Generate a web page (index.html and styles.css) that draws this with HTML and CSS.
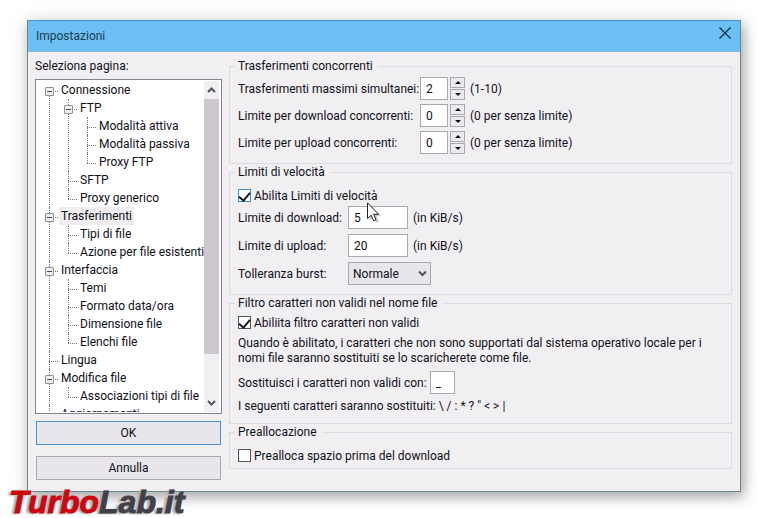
FILE: index.html
```html
<!DOCTYPE html>
<html lang="it">
<head>
<meta charset="utf-8">
<title>Impostazioni</title>
<link rel="stylesheet" href="styles.css">
</head>
<body>
<main class="window">
  <header class="titlebar">
    <h1>Impostazioni</h1>
    <button class="close" type="button" aria-label="Chiudi">
      <svg width="12" height="12" viewBox="0 0 12 12"><path d="M0.5 0.5 11.5 11.5M11.5 0.5 0.5 11.5" stroke="#12303f" stroke-width="1.3" fill="none"/></svg>
    </button>
  </header>
  <form class="content">
    <section class="sidebar">
      <h2>Seleziona pagina:</h2>
      <div class="tree-box">
        <ul class="tree">
          <li><button class="toggle" type="button" aria-label="Comprimi"></button><span>Connessione</span>
            <ul>
              <li><button class="toggle" type="button" aria-label="Comprimi"></button><span>FTP</span>
                <ul>
                  <li><span>Modalità attiva</span></li>
                  <li><span>Modalità passiva</span></li>
                  <li><span>Proxy FTP</span></li>
                </ul>
              </li>
              <li><span>SFTP</span></li>
              <li><span>Proxy generico</span></li>
            </ul>
          </li>
          <li><button class="toggle" type="button" aria-label="Comprimi"></button><span class="selected">Trasferimenti</span>
            <ul>
              <li><span>Tipi di file</span></li>
              <li><span>Azione per file esistenti</span></li>
            </ul>
          </li>
          <li><button class="toggle" type="button" aria-label="Comprimi"></button><span>Interfaccia</span>
            <ul>
              <li><span>Temi</span></li>
              <li><span>Formato data/ora</span></li>
              <li><span>Dimensione file</span></li>
              <li><span>Elenchi file</span></li>
            </ul>
          </li>
          <li><span>Lingua</span></li>
          <li><button class="toggle" type="button" aria-label="Comprimi"></button><span>Modifica file</span>
            <ul>
              <li><span>Associazioni tipi di file</span></li>
            </ul>
          </li>
          <li><span>Aggiornamenti</span></li>
        </ul>
        <div class="scrollbar">
          <svg width="15" height="18" viewBox="0 0 15 18"><path d="M4 11 7.5 7.5 11 11" stroke="#55525a" stroke-width="2" fill="none"/></svg>
          <div class="thumb"></div>
          <svg width="15" height="18" viewBox="0 0 15 18"><path d="M4 7 7.5 10.5 11 7" stroke="#55525a" stroke-width="2" fill="none"/></svg>
        </div>
      </div>
      <button class="action primary" type="button">OK</button>
      <button class="action" type="button">Annulla</button>
    </section>
    <section class="page">
      <fieldset>
        <legend>Trasferimenti concorrenti</legend>
        <div class="rows transfers">
          <label for="max">Trasferimenti massimi simultanei:</label>
          <input id="max" type="text" value="2">
          <span class="spin"><button type="button" aria-label="Aumenta"></button><button type="button" class="down" aria-label="Diminuisci"></button></span>
          <span>(1-10)</span>
          <label for="maxdown">Limite per download concorrenti:</label>
          <input id="maxdown" type="text" value="0">
          <span class="spin"><button type="button" aria-label="Aumenta"></button><button type="button" class="down" aria-label="Diminuisci"></button></span>
          <span>(0 per senza limite)</span>
          <label for="maxup">Limite per upload concorrenti:</label>
          <input id="maxup" type="text" value="0">
          <span class="spin"><button type="button" aria-label="Aumenta"></button><button type="button" class="down" aria-label="Diminuisci"></button></span>
          <span>(0 per senza limite)</span>
        </div>
      </fieldset>
      <fieldset>
        <legend>Limiti di velocità</legend>
        <label class="check limits"><input type="checkbox" class="hot" checked>Abilita Limiti di velocità</label>
        <div class="rows speed">
          <label for="down">Limite di download:</label>
          <input id="down" type="text" value="5">
          <span>(in KiB/s)</span>
          <label for="up">Limite di upload:</label>
          <input id="up" type="text" value="20">
          <span>(in KiB/s)</span>
          <label for="burst">Tolleranza burst:</label>
          <span class="select">
            <select id="burst"><option>Normale</option></select>
            <svg width="9" height="7" viewBox="0 0 9 7"><path d="M1 1.5 4.500 5 8 1.500" stroke="#55525a" stroke-width="2" fill="none"/></svg>
          </span>
        </div>
      </fieldset>
      <fieldset>
        <legend>Filtro caratteri non validi nel nome file</legend>
        <label class="check filter"><input type="checkbox" checked>Abiliita filtro caratteri non validi</label>
        <p>Quando è abilitato, i caratteri che non sono supportati dal sistema operativo locale per i<br>nomi file saranno sostituiti se lo scaricherete come file.</p>
        <div class="replace">
          <label for="char">Sostituisci i caratteri non validi con:</label>
          <input id="char" type="text" value="_">
        </div>
        <div class="chars">I seguenti caratteri saranno sostituiti: \ / : * ? " &lt; &gt; |</div>
      </fieldset>
      <fieldset class="last">
        <legend>Preallocazione</legend>
        <label class="check"><input type="checkbox">Prealloca spazio prima del download</label>
      </fieldset>
    </section>
  </form>
</main>
<svg class="cursor" width="17" height="22" viewBox="0 0 17 22">
  <path d="M3 3V18L6.500 15 9 21 12 19.500 9.500 14H14Z" fill="#000" opacity=".2"/>
  <path d="M.5 .8V16.500L4.200 13.200 6.600 18.800 9 17.700 6.600 12.300H11.600Z" fill="#fff" stroke="#222" stroke-width="1"/>
</svg>
<div class="logo"><span>Turbo</span>Lab.it</div>
</body>
</html>
```
FILE: styles.css
```css
* { box-sizing: border-box; }

body {
  margin: 0;
  padding: 20px 27px 26px;
  position: relative;
  background: #fff;
  color: #101018;
  font: 12px/18px Roboto, "Open Sans", sans-serif;
}

h1, h2, p, ul, fieldset, legend { margin: 0; padding: 0; }
h1, h2 { font-size: 12px; font-weight: 400; }
button, input, select { font: inherit; color: inherit; margin: 0; padding: 0; }

.window {
  background: #f2eff3;
  border: 1px solid #65898c;
  border-top-color: #4f93c6;
  box-shadow: 3px 5px 12px rgba(0, 0, 0, .3), 0 0 20px rgba(0, 0, 0, .1);
}

.titlebar {
  display: flex;
  justify-content: space-between;
  align-items: flex-start;
  height: 31px;
  padding: 6px 9px 0 8px;
  background: #6bbff3;
  border-bottom: 1px solid #82b8d8;
  color: #1d3c50;
}
.close { display: flex; border: 0; background: none; }

.content {
  display: grid;
  grid-template-columns: 187px minmax(0, 1fr);
  gap: 7px;
  padding: 7px 7px 0;
}

.sidebar { display: flex; flex-direction: column; }
.sidebar h2 { height: 20px; line-height: 14px; }

.tree-box {
  display: flex;
  height: 335px;
  margin-bottom: 7px;
  padding: 1px 2px 1px 0;
  overflow: hidden;
  background: #fff;
  border: 1px solid #85828a;
}
.tree { flex: 1; min-width: 0; padding-left: 13px; overflow: hidden; }
.tree, .tree ul { list-style: none; white-space: nowrap; }
.tree ul { padding-left: 7px; }
.tree li { position: relative; padding-left: 12px; }
.tree span { display: block; width: max-content; }
.tree li::before {
  content: "";
  position: absolute;
  left: 0;
  top: 0;
  bottom: 0;
  border-left: 1px dotted #777;
}
.tree li:last-child::before { bottom: auto; height: 10px; }
.tree > li:first-child::before { top: 10px; }
.tree li::after {
  content: "";
  position: absolute;
  left: 0;
  top: 10px;
  width: 9px;
  border-top: 1px dotted #777;
}
.toggle {
  position: absolute;
  z-index: 1;
  left: -4px;
  top: 6px;
  width: 9px;
  height: 9px;
  border: 1px solid #8f8f96;
  border-radius: 1px;
  background: linear-gradient(#445, #445) center / 5px 1px no-repeat, #efeff2;
}
.tree .selected { margin-left: -2px; padding: 0 2px; background: #efedf0; }

.scrollbar {
  display: flex;
  flex: none;
  flex-direction: column;
  width: 15px;
  background: #f1eff2;
}
.thumb { height: 255px; margin-bottom: auto; background: #cdc8cd; }

.action {
  height: 24px;
  margin: 0 1px 11px;
  border: 1px solid #aaa8ae;
  background: #e8e6ea;
}
.action.primary { border-color: #4d94cf; }

fieldset {
  min-width: 0;
  margin-bottom: 1px;
  padding: 0 8px 8px;
  border: 1px solid #dddae0;
  white-space: nowrap;
}
fieldset.last { padding-bottom: 5px; }
.page { padding-right: 1px; }
legend { margin-left: -3px; padding: 0 5px 0 3px; line-height: 14px; }

input[type="text"] {
  width: 100%;
  height: 23px;
  padding: 0 5px;
  border: 1px solid #aaa8ae;
  background: #fff;
}

.rows { display: grid; align-items: center; }
.transfers { grid-template-columns: 182px 28px 15px 1fr; gap: 4px 0; padding: 4px 0 1px; }
.transfers > span:not(.spin) { padding-left: 7px; }
.transfers .spin { display: grid; gap: 1px; margin-left: 2px; width: 15px; }
.spin button {
  display: grid;
  place-items: center;
  height: 11px;
  border: 1px solid #aaa8ae;
  background: #eceaee;
}
.spin button::before {
  content: "";
  border: 3px solid transparent;
  border-top: 0;
  border-bottom-color: #111;
}
.spin .down::before { border-top: 3px solid #111; border-bottom: 0; }

.check { display: flex; align-items: center; gap: 3px; height: 15px; margin-top: 9px; }
.check.filter { margin-top: 5px; }
.check input {
  display: grid;
  justify-content: center;
  appearance: none;
  width: 13px;
  height: 13px;
  border: 1px solid #55555c;
  background: #fff;
}
.check input.hot { border-color: #3f8fd0; }
.check input:checked::after {
  content: "";
  width: 5px;
  height: 9px;
  border: solid #181820;
  border-width: 0 2px 2px 0;
  transform: rotate(40deg);
}

.speed { grid-template-columns: 110px 60px 1fr; gap: 5px 0; padding: 3px 0 1px; }
.speed > span { padding-left: 5px; }
.speed .select { position: relative; grid-column: 2 / 4; width: 83px; padding: 0; }
.select select {
  display: block;
  appearance: none;
  width: 100%;
  height: 23px;
  padding: 0 4px;
  border: 1px solid #aaa8ae;
  border-radius: 0;
  background: #e8e6ea;
}
.select svg { position: absolute; right: 4px; top: 8px; pointer-events: none; }

p { margin: 6px 0 5px; line-height: 15px; }
.replace { display: flex; align-items: center; gap: 3px; }
.replace input[type="text"] { width: 25px; }
.chars { margin-top: 3px; }

.cursor { position: absolute; left: 367px; top: 202px; pointer-events: none; }

.logo {
  position: absolute;
  left: 9px;
  bottom: 0;
  color: #434048;
  font: italic bold 32px/32px "Liberation Sans", sans-serif;
  -webkit-text-stroke: 1px;
  text-shadow: 0 0 2px #fff, 0 0 2px #888, -3px 1px 2px #aaa;
}
.logo span { color: #cc0510; }
```
